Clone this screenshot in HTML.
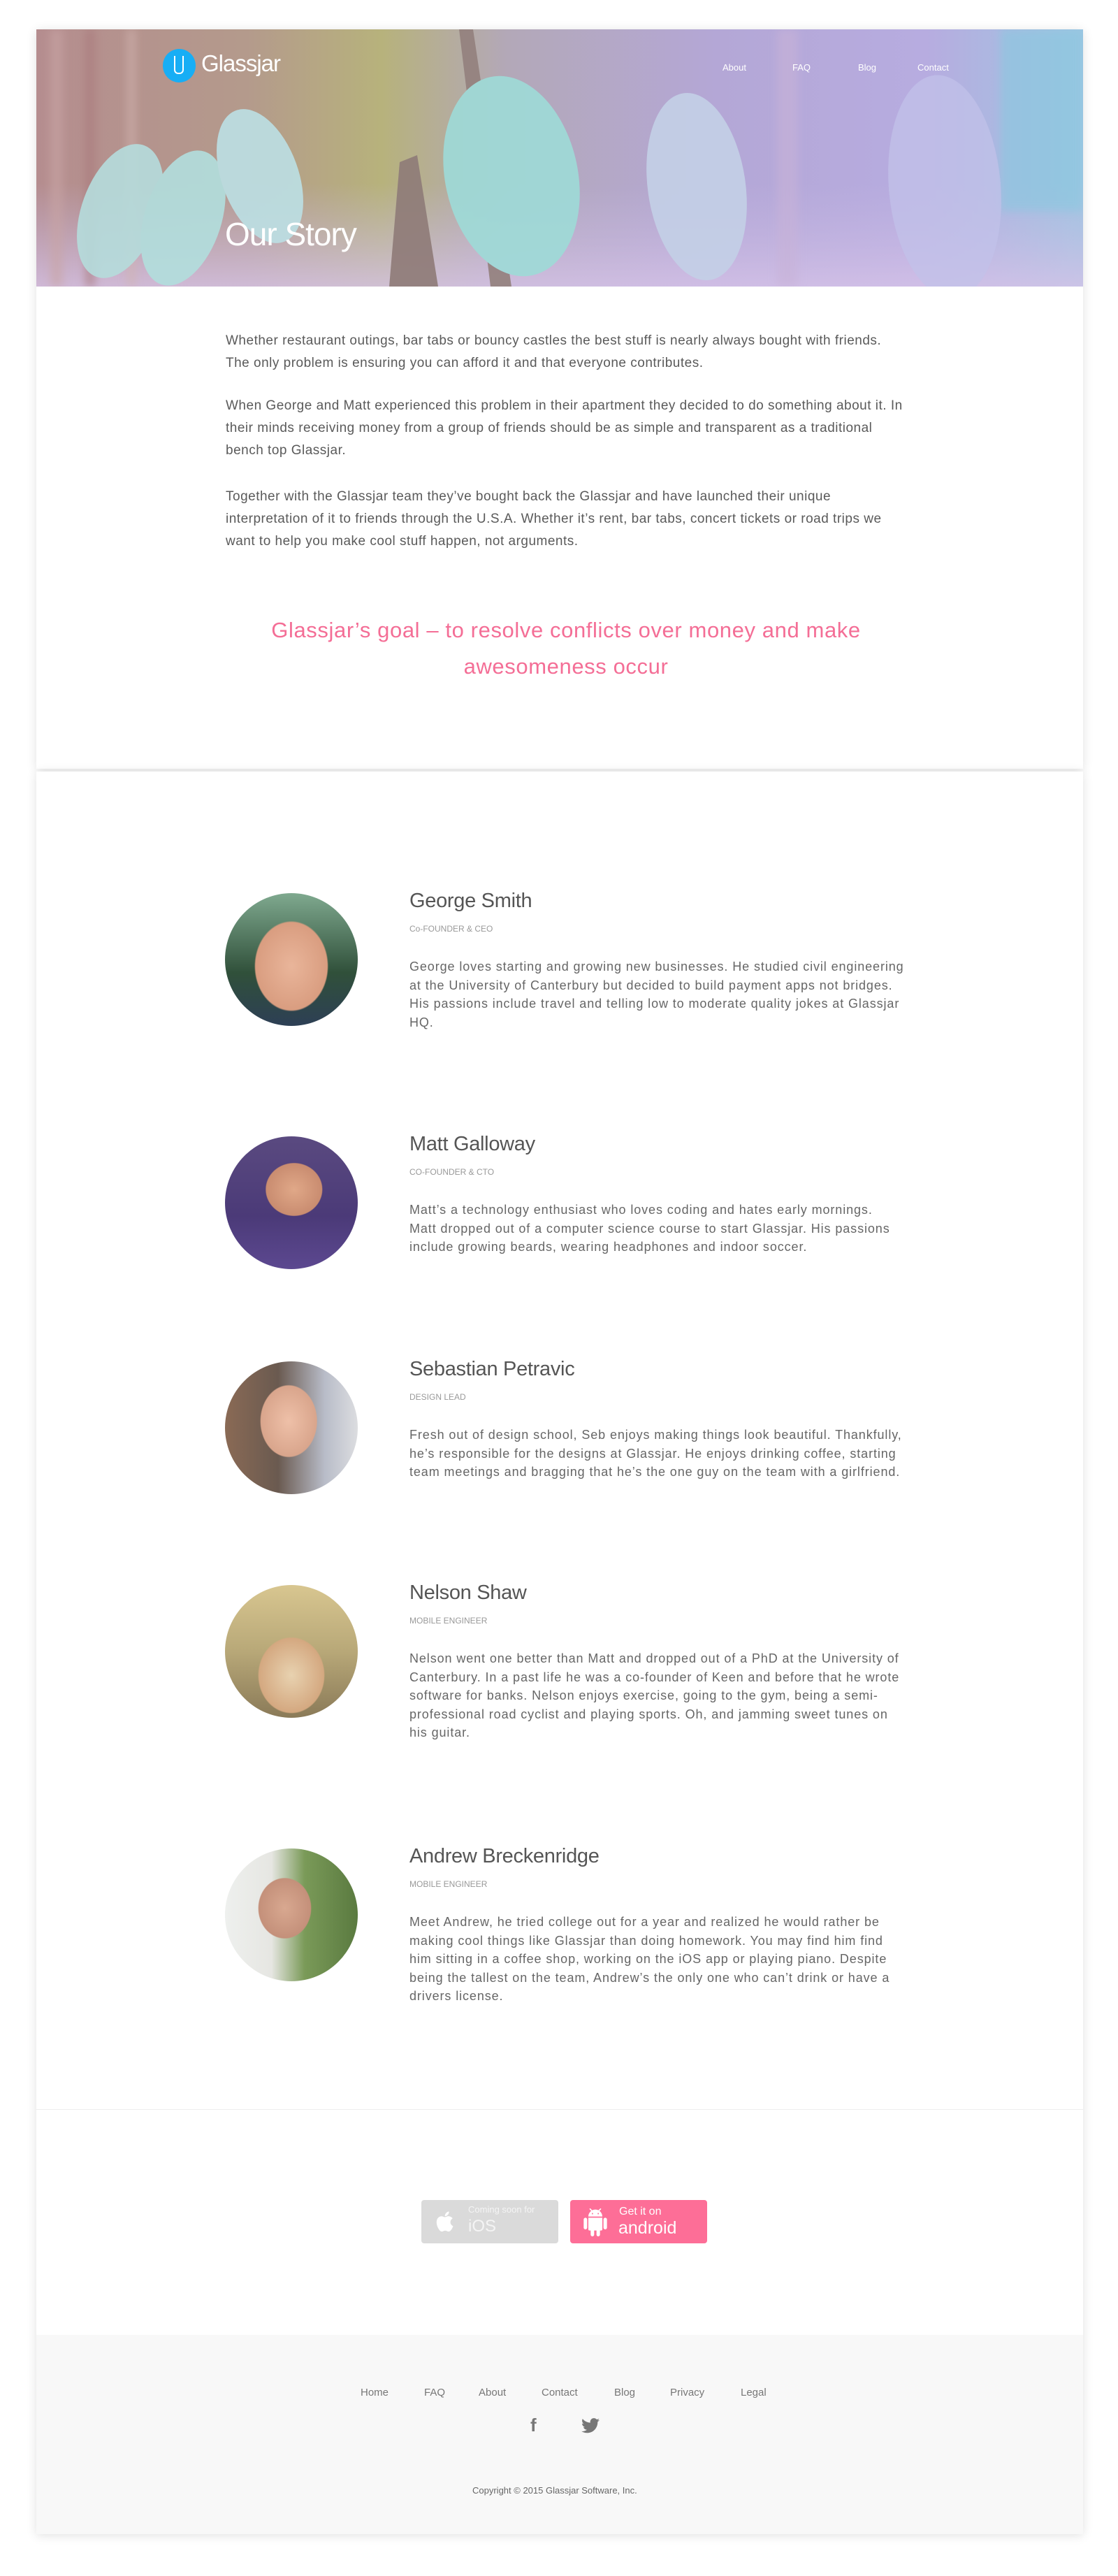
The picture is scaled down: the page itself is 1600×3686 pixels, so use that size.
<!DOCTYPE html>
<html><head><meta charset="utf-8"><style>
*{margin:0;padding:0;box-sizing:border-box}
body{width:1600px;height:3686px;background:#fff;font-family:"Liberation Sans",sans-serif;position:relative;overflow:hidden}
.card{position:absolute;left:52px;width:1498px;background:#fff;box-shadow:0 2px 14px rgba(0,0,0,.12)}
.abs{position:absolute;white-space:nowrap}
.p{font-size:19px;color:#5a5a5a;line-height:32px;letter-spacing:.5px}
.name{font-size:29px;color:#555;letter-spacing:-.3px}
.role{font-size:12px;color:#999}
.bio{font-size:18px;color:#666;line-height:26.5px;letter-spacing:.9px}
.ph{position:absolute;left:322px;width:190px;height:190px;border-radius:50%;overflow:hidden}
.fl{font-size:15px;color:#777}
</style></head><body>

<div class="card" style="top:42px;height:1058px;"></div>
<div class="card" style="top:1104px;height:2522px;"></div>

<div style="position:absolute;left:52px;top:42px;width:1498px;height:368px;overflow:hidden;">
<svg width="1498" height="368" viewBox="0 0 1498 368">
<defs>
<linearGradient id="bg" x1="0" x2="1" y1="0" y2="0">
<stop offset="0" stop-color="#b58d8f"/><stop offset=".2" stop-color="#b49a8c"/>
<stop offset=".33" stop-color="#b7b27c"/><stop offset=".45" stop-color="#b3a8b8"/>
<stop offset=".65" stop-color="#b4a7d6"/><stop offset=".85" stop-color="#b7ace0"/>
<stop offset="1" stop-color="#9fc6e2"/></linearGradient>
<linearGradient id="fl" x1="0" x2="0" y1="0" y2="1"><stop offset="0" stop-color="#c6b8e2" stop-opacity="0"/><stop offset="1" stop-color="#d6c3e8" stop-opacity=".8"/></linearGradient>
<filter id="b"><feGaussianBlur stdDeviation="6"/></filter>
</defs>
<rect width="1498" height="368" fill="url(#bg)"/>
<rect y="220" width="1498" height="148" fill="url(#fl)"/>
<g filter="url(#b)" opacity=".6">
<rect x="20" y="0" width="18" height="368" fill="#c9a5a5"/><rect x="70" y="0" width="14" height="368" fill="#a8787a"/>
<rect x="130" y="0" width="12" height="368" fill="#d2b4b0"/><rect x="1060" y="0" width="30" height="368" fill="#c8b2d8"/>
<rect x="1380" y="0" width="118" height="260" fill="#8ac8e0"/>
</g>
<g opacity=".92">
<ellipse cx="120" cy="260" rx="55" ry="100" transform="rotate(20 120 260)" fill="#b5dcdc"/>
<ellipse cx="210" cy="270" rx="55" ry="100" transform="rotate(18 210 270)" fill="#b2dedd"/>
<ellipse cx="320" cy="210" rx="55" ry="100" transform="rotate(-20 320 210)" fill="#bcdfe3"/>
<path d="M520 190 L545 180 L575 368 L505 368 Z" fill="#8f7c78"/>
<path d="M605 0 L625 0 L680 368 L650 368 Z" fill="#94817e"/>
<ellipse cx="680" cy="210" rx="95" ry="145" transform="rotate(-12 680 210)" fill="#9fdad7"/>
<ellipse cx="945" cy="225" rx="70" ry="135" transform="rotate(-8 945 225)" fill="#c4cfe6"/>
<ellipse cx="1300" cy="225" rx="80" ry="160" transform="rotate(-5 1300 225)" fill="#c2c2ea" opacity=".8"/>
</g>
</svg>
<div class="abs" style="left:181px;top:28px;width:47px;height:48px;border-radius:50%;background:#17aef5;"></div>
<div class="abs" style="left:197px;top:38px;width:14px;height:26px;border:2.5px solid #fff;border-top:none;border-radius:0 0 6px 6px;"></div>
<div class="abs" style="left:236px;top:30px;font-size:33px;color:#fff;letter-spacing:-1px;">Glassjar</div>
<div class="abs" style="left:982px;top:47px;font-size:13px;color:#fff;">About</div>
<div class="abs" style="left:1082px;top:47px;font-size:13px;color:#fff;">FAQ</div>
<div class="abs" style="left:1176px;top:47px;font-size:13px;color:#fff;">Blog</div>
<div class="abs" style="left:1261px;top:47px;font-size:13px;color:#fff;">Contact</div>
<div class="abs" style="left:270px;top:266px;font-size:46px;color:#fff;letter-spacing:-1px;">Our Story</div>
</div>

<div class="abs p" style="left:323px;top:472px;">Whether restaurant outings, bar tabs or bouncy castles the best stuff is nearly always bought with friends.<br>The only problem is ensuring you can afford it and that everyone contributes.</div>
<div class="abs p" style="left:323px;top:565px;">When George and Matt experienced this problem in their apartment they decided to do something about it. In<br>their minds receiving money from a group of friends should be as simple and transparent as a traditional<br>bench top Glassjar.</div>
<div class="abs p" style="left:323px;top:695px;">Together with the Glassjar team they’ve bought back the Glassjar and have launched their unique<br>interpretation of it to friends through the U.S.A. Whether it’s rent, bar tabs, concert tickets or road trips we<br>want to help you make cool stuff happen, not arguments.</div>
<div class="abs" style="left:260px;width:1100px;top:876px;text-align:center;font-size:31px;line-height:52px;color:#f46e96;white-space:normal;letter-spacing:.6px;">Glassjar’s goal – to resolve conflicts over money and make<br>awesomeness occur</div>

<div class="ph" style="top:1278px;background:radial-gradient(ellipse 45% 55% at 50% 55%,#e9b59a 0,#d99d80 60%,transparent 62%),linear-gradient(180deg,#7fa98f,#30503a 60%,#2d3f55);"></div>
<div class="abs name" style="left:586px;top:1273px;">George Smith</div>
<div class="abs role" style="left:586px;top:1322px;">Co-FOUNDER &amp; CEO</div>
<div class="abs bio" style="left:586px;top:1370px;">George loves starting and growing new businesses. He studied civil engineering<br>at the University of Canterbury but decided to build payment apps not bridges.<br>His passions include travel and telling low to moderate quality jokes at Glassjar<br>HQ.</div>

<div class="ph" style="top:1626px;background:radial-gradient(ellipse 30% 28% at 52% 40%,#e0a888 0,#c98c70 70%,transparent 72%),linear-gradient(180deg,#5a4a80,#4b3a78 60%,#5c4890);"></div>
<div class="abs name" style="left:586px;top:1621px;">Matt Galloway</div>
<div class="abs role" style="left:586px;top:1670px;">CO-FOUNDER &amp; CTO</div>
<div class="abs bio" style="left:586px;top:1718px;">Matt’s a technology enthusiast who loves coding and hates early mornings.<br>Matt dropped out of a computer science course to start Glassjar. His passions<br>include growing beards, wearing headphones and indoor soccer.</div>

<div class="ph" style="top:1948px;background:radial-gradient(ellipse 30% 38% at 48% 45%,#eec0a8 0,#d9a58c 70%,transparent 72%),linear-gradient(90deg,#8a6a55,#6a5a50 40%,#b8bcc8 75%,#dcdde0);"></div>
<div class="abs name" style="left:586px;top:1943px;">Sebastian Petravic</div>
<div class="abs role" style="left:586px;top:1992px;">DESIGN LEAD</div>
<div class="abs bio" style="left:586px;top:2040px;">Fresh out of design school, Seb enjoys making things look beautiful. Thankfully,<br>he’s responsible for the designs at Glassjar. He enjoys drinking coffee, starting<br>team meetings and bragging that he’s the one guy on the team with a girlfriend.</div>

<div class="ph" style="top:2268px;background:radial-gradient(ellipse 35% 40% at 50% 68%,#e8d2b0 0,#d4a880 70%,transparent 72%),linear-gradient(180deg,#d8c690,#b8a878 50%,#8a7a58);"></div>
<div class="abs name" style="left:586px;top:2263px;">Nelson Shaw</div>
<div class="abs role" style="left:586px;top:2312px;">MOBILE ENGINEER</div>
<div class="abs bio" style="left:586px;top:2360px;">Nelson went one better than Matt and dropped out of a PhD at the University of<br>Canterbury. In a past life he was a co-founder of Keen and before that he wrote<br>software for banks. Nelson enjoys exercise, going to the gym, being a semi-<br>professional road cyclist and playing sports. Oh, and jamming sweet tunes on<br>his guitar.</div>

<div class="ph" style="top:2645px;background:radial-gradient(ellipse 28% 32% at 45% 45%,#d8a890 0,#c4907a 70%,transparent 72%),linear-gradient(90deg,#eef0ee,#e6e6e2 35%,#7a9a58 60%,#5a7a40);"></div>
<div class="abs name" style="left:586px;top:2640px;">Andrew Breckenridge</div>
<div class="abs role" style="left:586px;top:2689px;">MOBILE ENGINEER</div>
<div class="abs bio" style="left:586px;top:2737px;">Meet Andrew, he tried college out for a year and realized he would rather be<br>making cool things like Glassjar than doing homework. You may find him find<br>him sitting in a coffee shop, working on the iOS app or playing piano. Despite<br>being the tallest on the team, Andrew’s the only one who can’t drink or have a<br>drivers license.</div>

<div class="abs" style="left:52px;top:3018px;width:1498px;height:1px;background:#eee;"></div>

<div class="abs" style="left:603px;top:3148px;width:196px;height:62px;background:#dadada;border-radius:4px;"></div>
<svg class="abs" style="left:620px;top:3161px;" width="36" height="36" viewBox="0 0 24 24"><path fill="#fff" d="M16.4 12.6c0-2.5 2-3.7 2.1-3.8-1.2-1.7-3-1.9-3.6-2-1.5-.2-3 .9-3.7.9-.8 0-2-.9-3.2-.9-1.7 0-3.2 1-4 2.4-1.7 3-.4 7.4 1.2 9.8.8 1.2 1.8 2.5 3.1 2.4 1.2 0 1.7-.8 3.2-.8s1.9.8 3.2.8c1.3 0 2.2-1.2 3-2.4.9-1.4 1.3-2.7 1.3-2.8-.1 0-2.6-1-2.6-3.6zM14 5.3c.7-.8 1.1-1.9 1-3-1 0-2.1.7-2.8 1.5-.6.7-1.2 1.8-1 2.9 1 .1 2.1-.6 2.8-1.4z"/></svg>
<div class="abs" style="left:670px;top:3154px;font-size:13px;color:#f4f4f4;">Coming soon for</div>
<div class="abs" style="left:670px;top:3172px;font-size:24px;color:#f4f4f4;">iOS</div>

<div class="abs" style="left:816px;top:3148px;width:196px;height:62px;background:#fd6e97;border-radius:4px;"></div>
<svg class="abs" style="left:832px;top:3160px;" width="40" height="40" viewBox="0 0 24 24"><path fill="#fff" d="M6 18c0 .6.4 1 1 1h1v3.5c0 .8.7 1.5 1.5 1.5S11 23.3 11 22.5V19h2v3.5c0 .8.7 1.5 1.5 1.5s1.5-.7 1.5-1.5V19h1c.6 0 1-.4 1-1V8H6v10zM3.5 8C2.7 8 2 8.7 2 9.5v7c0 .8.7 1.5 1.5 1.5S5 17.3 5 16.5v-7C5 8.7 4.3 8 3.5 8zm17 0c-.8 0-1.5.7-1.5 1.5v7c0 .8.7 1.5 1.5 1.5s1.5-.7 1.5-1.5v-7c0-.8-.7-1.5-1.5-1.5zm-4.97-5.84l1.3-1.3c.2-.2.2-.5 0-.7-.2-.2-.5-.2-.7 0l-1.48 1.48C13.85 1.23 12.95 1 12 1c-.96 0-1.86.23-2.66.63L7.85.15c-.2-.2-.5-.2-.7 0-.2.2-.2.5 0 .7l1.31 1.31C6.97 3.26 6 5.01 6 7h12c0-1.99-.97-3.75-2.47-4.84zM10 5H9V4h1v1zm5 0h-1V4h1v1z"/></svg>
<div class="abs" style="left:886px;top:3156px;font-size:16px;color:#fff;">Get it on</div>
<div class="abs" style="left:885px;top:3174px;font-size:25px;color:#fff;">android</div>

<div class="abs" style="left:52px;top:3341px;width:1498px;height:285px;background:#f8f8f8;"></div>
<div class="abs fl" style="left:516px;top:3415px;">Home</div>
<div class="abs fl" style="left:607px;top:3415px;">FAQ</div>
<div class="abs fl" style="left:685px;top:3415px;">About</div>
<div class="abs fl" style="left:775px;top:3415px;">Contact</div>
<div class="abs fl" style="left:879px;top:3415px;">Blog</div>
<div class="abs fl" style="left:959px;top:3415px;">Privacy</div>
<div class="abs fl" style="left:1060px;top:3415px;">Legal</div>
<div class="abs" style="left:759px;top:3455px;font-size:26px;font-weight:bold;color:#777;">f</div>
<svg class="abs" style="left:832px;top:3460px;" width="26" height="22" viewBox="0 0 24 20"><path fill="#777" d="M24 2.4c-.9.4-1.8.6-2.8.8 1-.6 1.8-1.6 2.2-2.7-1 .6-2 1-3.1 1.2C19.3.7 18 0 16.6 0c-2.7 0-4.9 2.2-4.9 4.9 0 .4 0 .8.1 1.1C7.7 5.8 4.1 3.9 1.7.9c-.4.7-.7 1.6-.7 2.5 0 1.7.9 3.2 2.2 4.1-.8 0-1.6-.2-2.2-.6v.1c0 2.4 1.7 4.4 3.9 4.8-.4.1-.8.2-1.3.2-.3 0-.6 0-.9-.1.6 2 2.4 3.4 4.6 3.4-1.7 1.3-3.8 2.1-6.1 2.1-.4 0-.8 0-1.2-.1 2.2 1.4 4.8 2.2 7.5 2.2 9.1 0 14-7.5 14-14v-.6c1-.7 1.8-1.6 2.5-2.5z"/></svg>
<div class="abs" style="left:676px;top:3556px;font-size:13px;color:#666;">Copyright © 2015 Glassjar Software, Inc.</div>
</body></html>
